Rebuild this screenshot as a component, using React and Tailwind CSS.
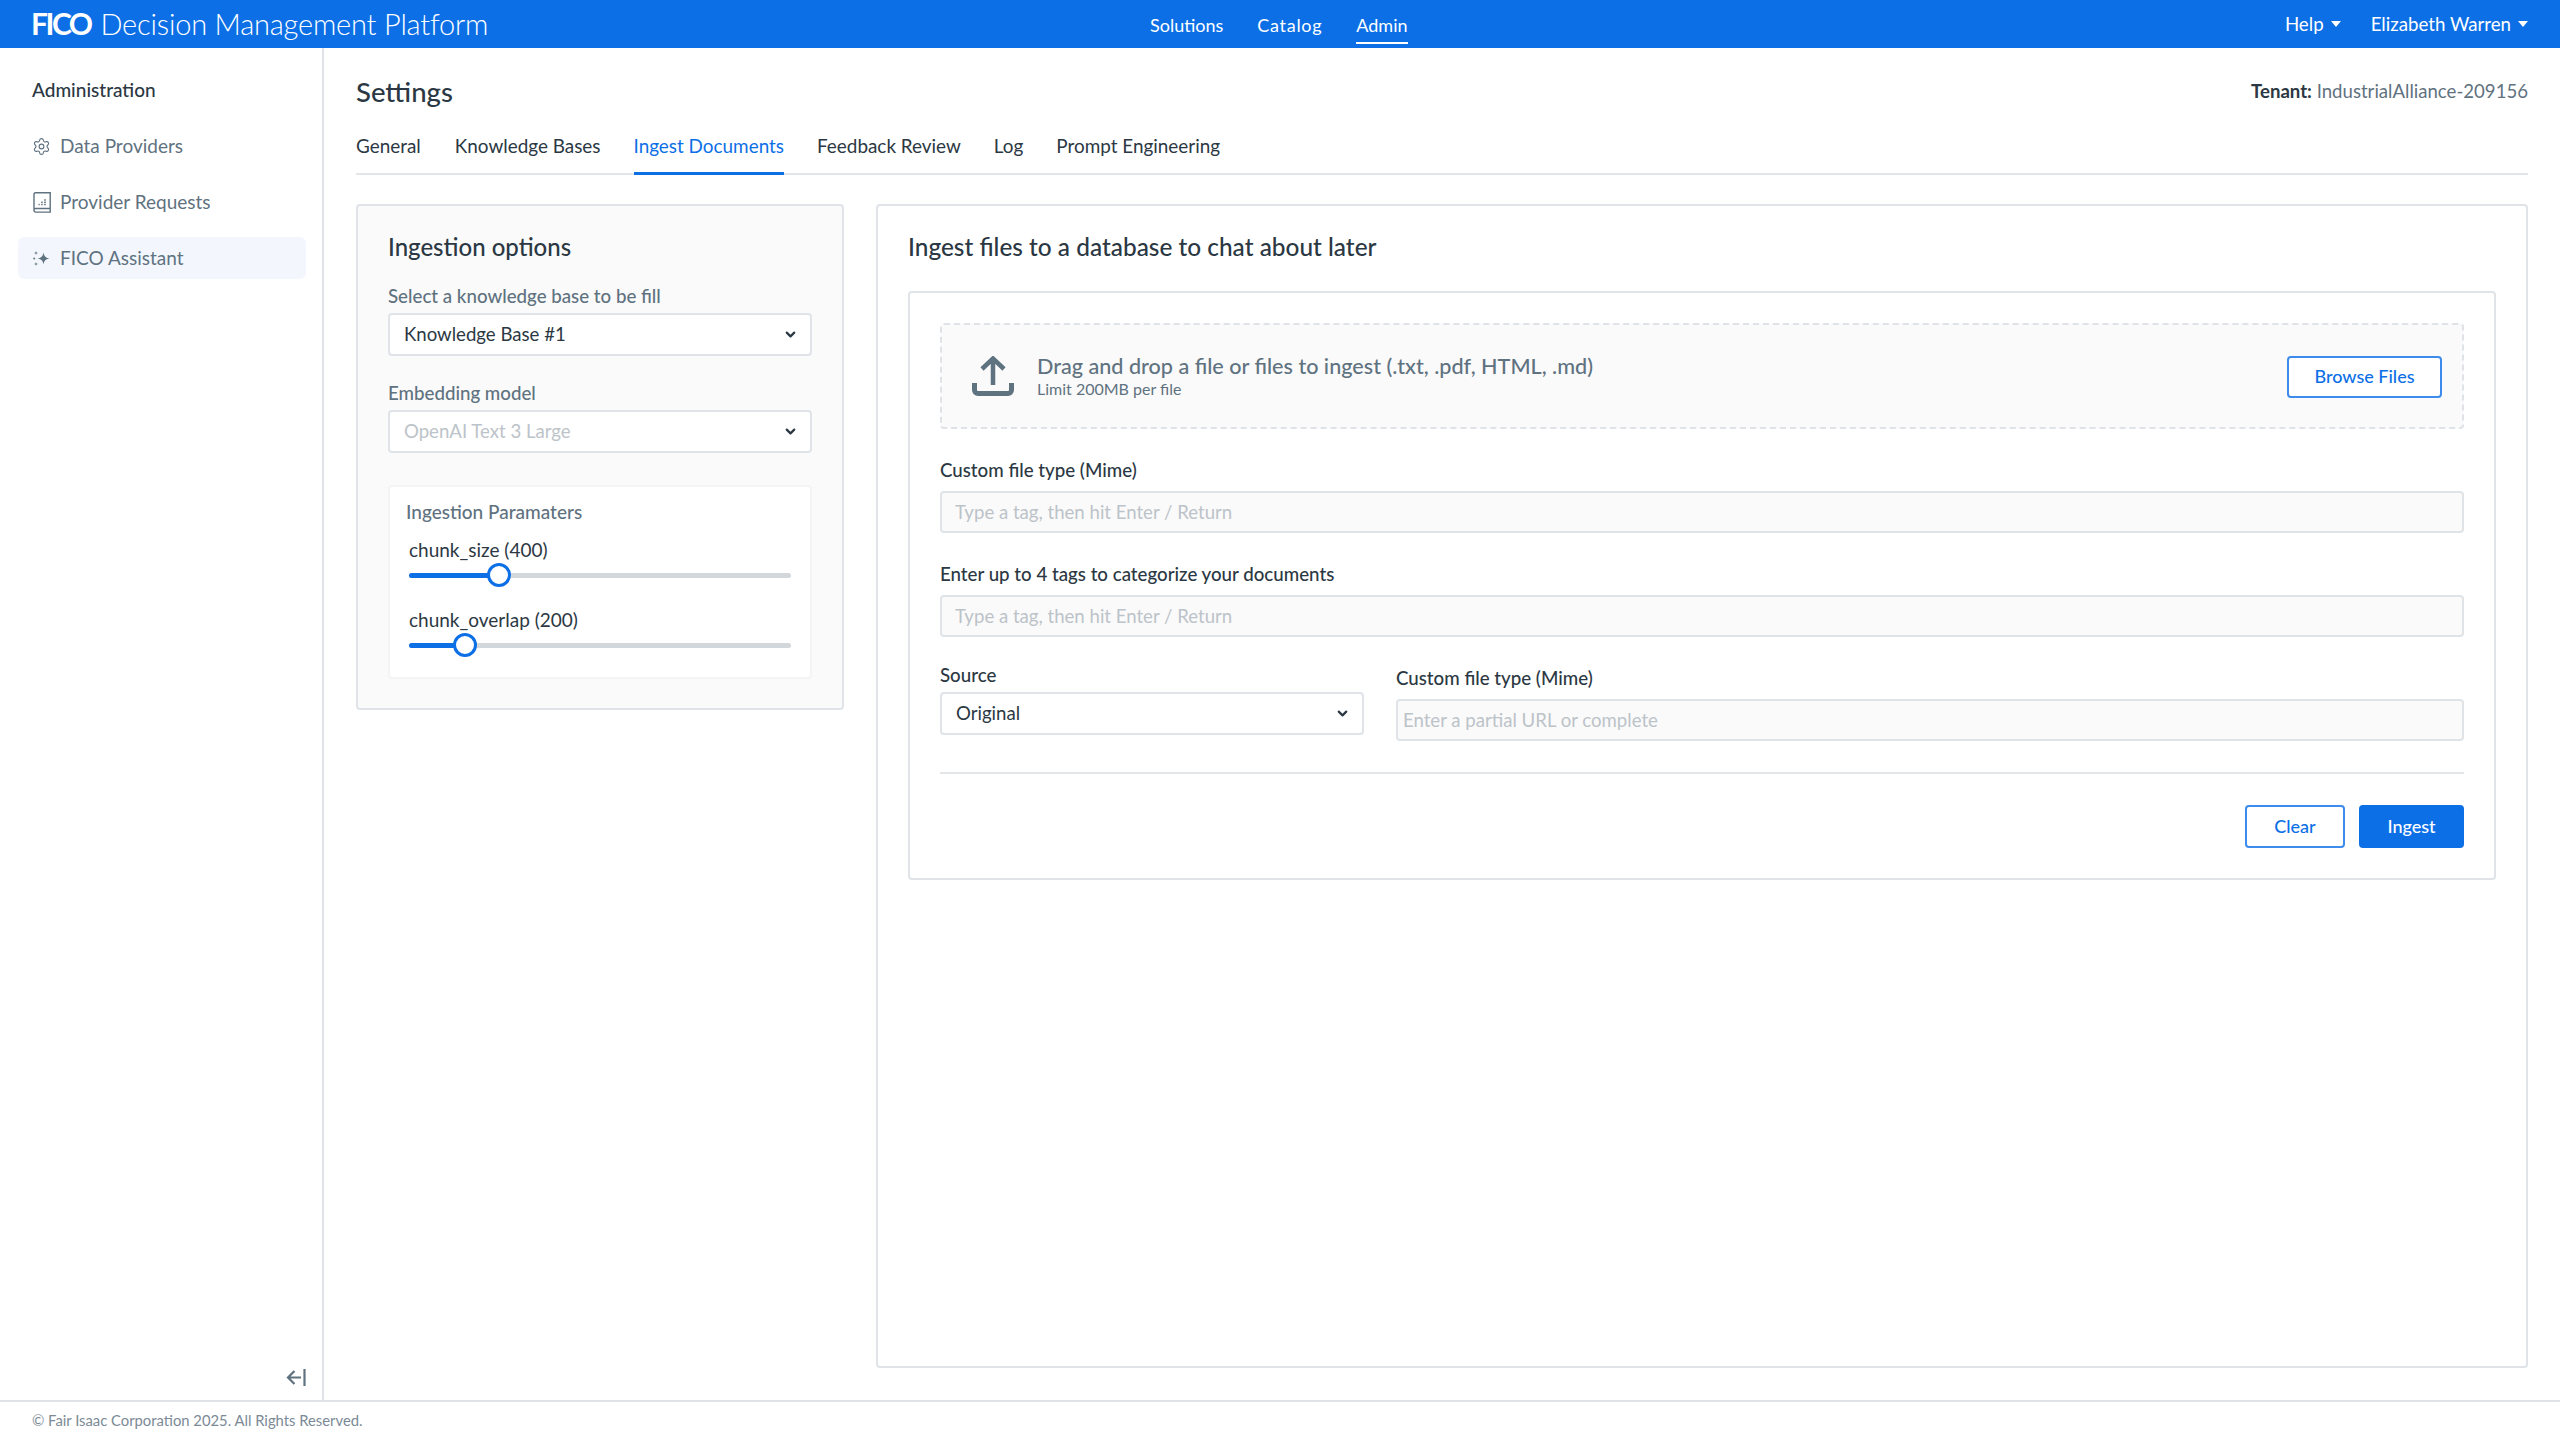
import { ChevronDown, Settings } from "lucide-react";

const tabs = ["General", "Knowledge Bases", "Ingest Documents", "Feedback Review", "Log", "Prompt Engineering"];

function Caret() {
  return <span className="ml-[7px] inline-block border-x-[5px] border-t-[6px] border-x-transparent border-t-white" />;
}

function BookIcon() {
  return (
    <svg width="18" height="21" viewBox="0 0 18 21" fill="none" stroke="#5f7280" strokeWidth="1.4">
      <path d="M1 17V2a1.200 1.200 0 0 1 1.200-1.200h15V16.500H2.700A1.700 1.700 0 0 0 1 18.200a1.700 1.700 0 0 0 1.700 1.900h14.500v-3.600" />
      <path d="M5.500 12.500h1.200M8.200 12.500h1.500M8.200 10.300h1.500M11.200 12.500h1.600M11.200 10.300h1.600M11.200 8h1.600" strokeWidth="1.600" />
    </svg>
  );
}

function SparkIcon() {
  return (
    <svg width="17" height="15" viewBox="0 0 17 15" fill="#5f7280">
      <path d="M10.500 1.500c.6 3.700 2 5.300 6 6-4 .7-5.400 2.300-6 6-.6-3.700-2-5.300-6-6 4-.7 5.400-2.300 6-6Z" />
      <path d="M3 0l.5 1.500 1.500.5-1.500.5L3 4l-.5-1.500L1 2l1.500-.5ZM3 11l.5 1.500 1.500.5-1.500.5L3 15l-.5-1.500L1 13l1.500-.5Z" />
      <circle cx="1.200" cy="7.500" r="1" />
    </svg>
  );
}

function UploadIcon() {
  return (
    <svg width="42" height="40" viewBox="0 0 42 40" fill="none" stroke="#5f7280">
      <path d="M21 29V3M10 13 21 2.500 32 13" strokeWidth="4.500" />
      <path d="M2.500 27v7a3.500 3.500 0 0 0 3.500 3.500h30a3.500 3.500 0 0 0 3.500-3.500v-7" strokeWidth="5" />
    </svg>
  );
}

function CollapseIcon() {
  return (
    <svg width="20" height="17" viewBox="0 0 20 17" fill="none" stroke="#5f7280" strokeWidth="2.2">
      <path d="M18.500 0v17M15 8.500H2M8.500 2 2 8.500 8.500 15" />
    </svg>
  );
}

function SideItem({ icon, label, active }) {
  return (
    <div className={`ml-[18px] mr-[16px] flex h-[42px] items-center gap-[9px] rounded-md pl-[14px] text-[19px] text-[#5f7280] ${active ? "bg-[#f3f7fd]" : ""}`}>
      <span className="flex w-[19px] justify-center">{icon}</span>
      {label}
    </div>
  );
}

function FakeSelect({ value, muted, className }) {
  return (
    <div className={`flex h-[43px] items-center justify-between rounded border-2 border-[#e0e4e8] bg-white pl-[14px] pr-[12px] text-[18.6px] ${muted ? "text-[#bcc3c9]" : "text-[#2b3843]"} ${className}`}>
      {value}
      <ChevronDown size={15} strokeWidth={3.5} className="text-[#2b3843]" />
    </div>
  );
}

function Slider({ label, fill, thumb }) {
  return (
    <div>
      <div className="text-[19px] leading-[24px] text-[#2b3843]">{label}</div>
      <div className="relative mt-[11px] h-[5px] w-[382px] rounded-full bg-[#d2d7db]">
        <div className={`h-full rounded-full bg-[#0c6fe6] ${fill}`} />
        <div className={`absolute top-[-10px] h-[24px] w-[24px] rounded-full border-[3px] border-[#0c6fe6] bg-white ${thumb}`} />
      </div>
    </div>
  );
}

function TagInput({ placeholder, className }) {
  return (
    <input
      placeholder={placeholder}
      className={`block h-[42px] w-full rounded border-2 border-[#e0e4e8] bg-[#fafafa] text-[18.6px] outline-none placeholder:text-[#bcc3c9] ${className}`}
    />
  );
}

export default function App() {
  return (
    <div className="flex h-screen flex-col overflow-hidden bg-white font-['Lato',sans-serif] text-[#2b3843]">
      {/* top bar */}
      <header className="relative flex h-[48px] shrink-0 items-center bg-[#0c6fe6] pl-[31px] pr-[32px] text-white">
        <div className="flex items-center pb-[2px]">
          <span className="text-[30px] font-bold leading-none tracking-[-2.5px]">FICO</span>
          <span className="ml-[10px] text-[29px] font-light leading-none tracking-[-0.2px]">Decision Management Platform</span>
        </div>
        <nav className="absolute left-[1150px] top-0 flex h-[48px] items-center gap-[34px] pt-[3px] text-[18px]">
          <span>Solutions</span>
          <span className="tracking-[0.7px]">Catalog</span>
          <span className="relative">
            Admin
            <span className="absolute bottom-[-5px] left-0 right-0 h-[2px] bg-white" />
          </span>
        </nav>
        <div className="ml-auto flex items-center gap-[30px] text-[18.7px]">
          <span className="flex items-center">Help<Caret /></span>
          <span className="flex items-center">Elizabeth Warren<Caret /></span>
        </div>
      </header>

      <div className="flex min-h-0 flex-1">
        {/* left nav */}
        <aside className="relative flex w-[324px] shrink-0 flex-col border-r-2 border-[#dfe3e7] pt-[29px]">
          <div className="mb-[22px] pl-[32px] text-[19px] font-medium leading-[26px] text-[#2b3843]">Administration</div>
          <div className="flex flex-col gap-[14px]">
            <SideItem icon={<Settings size={25} strokeWidth={1.4} />} label="Data Providers" />
            <SideItem icon={<BookIcon />} label="Provider Requests" />
            <SideItem icon={<SparkIcon />} label="FICO Assistant" active />
          </div>
          <div className="absolute bottom-[14px] right-[16px]">
            <CollapseIcon />
          </div>
        </aside>

        {/* content */}
        <main className="flex min-w-0 flex-1 flex-col px-[32px]">
          <div className="flex h-[88px] shrink-0 items-center justify-between">
            <h1 className="text-[27.5px] font-medium">Settings</h1>
            <div className="text-[18.6px] text-[#5f7280]">
              <span className="font-bold text-[#2b3843]">Tenant:</span> IndustrialAlliance-209156
            </div>
          </div>
          <div className="flex h-[39px] shrink-0 gap-[33px] border-b-2 border-[#e3e6e9] text-[18.9px] leading-[20px]">
            {tabs.map((t) => (
              <div
                key={t}
                className={`-mb-[2px] ${t === "General" ? "pr-[1px]" : ""} ${t === "Ingest Documents" ? "border-b-[3px] border-[#0c6fe6] text-[#0c6fe6]" : ""}`}
              >
                {t}
              </div>
            ))}
          </div>

          <div className="mt-[29px] flex min-h-0 flex-1 items-start gap-[32px] pb-[32px]">
            {/* options card */}
            <section className="w-[488px] shrink-0 rounded border-2 border-[#e0e4e8] bg-[#fafafa] px-[30px] pb-[29px] pt-[25px]">
              <h2 className="text-[24px] font-medium leading-[32px]">Ingestion options</h2>
              <label className="mt-[21px] block text-[18.7px] font-medium leading-[24px] text-[#5f7280]">Select a knowledge base to be fill</label>
              <FakeSelect value="Knowledge Base #1" className="mt-[5px]" />
              <label className="mt-[25px] block text-[18.7px] font-medium leading-[24px] text-[#5f7280]">Embedding model</label>
              <FakeSelect value="OpenAI Text 3 Large" muted className="mt-[5px]" />
              <div className="mt-[32px] rounded border-2 border-[#f3f4f5] bg-white pb-[29px] pl-[19px] pt-[13px]">
                <div className="-ml-[3px] text-[19px] font-medium leading-[24px] text-[#5f7280]">Ingestion Paramaters</div>
                <div className="mt-[14px] flex flex-col gap-[30px]">
                  <Slider label="chunk_size (400)" fill="w-[90px]" thumb="left-[78px]" />
                  <Slider label="chunk_overlap (200)" fill="w-[56px]" thumb="left-[44px]" />
                </div>
              </div>
            </section>

            {/* ingest card */}
            <section className="h-full min-w-0 flex-1 rounded border-2 border-[#e0e4e8] px-[30px] pt-[25px]">
              <h2 className="text-[24.4px] font-medium leading-[32px]">Ingest files to a database to chat about later</h2>
              <div className="mt-[28px] rounded border-2 border-[#e0e4e8] px-[30px] pb-[30px] pt-[30px]">
                <div className="flex h-[106px] items-center rounded border-2 border-dashed border-[#dfe3e7] bg-[#fafafa] pl-[30px] pr-[20px]">
                  <UploadIcon />
                  <div className="ml-[23px] flex-1">
                    <div className="-mt-[2px] text-[21.6px] font-medium leading-[26px] text-[#5f7280]">Drag and drop a file or files to ingest (.txt, .pdf, HTML, .md)</div>
                    <div className="mt-[1px] text-[16px] leading-[18px] text-[#5f7280]">Limit 200MB per file</div>
                  </div>
                  <button className="mt-[1px] h-[42px] w-[155px] rounded border-2 border-[#3d8bec] bg-white text-[18px] font-medium text-[#0c6fe6]">Browse Files</button>
                </div>
                <label className="mt-[29px] block text-[18.7px] font-medium leading-[24px]">Custom file type (Mime)</label>
                <TagInput placeholder="Type a tag, then hit Enter / Return" className="mt-[9px] pl-[13px]" />
                <label className="mt-[29px] block text-[18.7px] font-medium leading-[24px]">Enter up to 4 tags to categorize your documents</label>
                <TagInput placeholder="Type a tag, then hit Enter / Return" className="mt-[9px] pl-[13px]" />
                <div className="mt-[26px] flex gap-[32px]">
                  <div className="w-[424px] shrink-0">
                    <label className="block text-[18.7px] font-medium leading-[24px]">Source</label>
                    <FakeSelect value="Original" className="mt-[5px]" />
                  </div>
                  <div className="min-w-0 flex-1 pt-[3px]">
                    <label className="block text-[18.7px] font-medium leading-[24px]">Custom file type (Mime)</label>
                    <TagInput placeholder="Enter a partial URL or complete" className="mt-[9px] pl-[5px]" />
                  </div>
                </div>
                <div className="mt-[31px] border-t-2 border-[#e3e6e9]" />
                <div className="mt-[31px] flex justify-end gap-[14px]">
                  <button className="h-[43px] w-[100px] rounded border-2 border-[#3d8bec] bg-white text-[18px] font-medium text-[#0c6fe6]">Clear</button>
                  <button className="h-[43px] w-[105px] rounded bg-[#0c6fe6] text-[18px] font-medium text-white">Ingest</button>
                </div>
              </div>
            </section>
          </div>
        </main>
      </div>

      <footer className="flex h-[40px] shrink-0 items-center border-t-2 border-[#dfe3e7] pb-[2px] pl-[32px] text-[14.8px] text-[#7b8a96]">
        © Fair Isaac Corporation 2025. All Rights Reserved.
      </footer>
    </div>
  );
}
